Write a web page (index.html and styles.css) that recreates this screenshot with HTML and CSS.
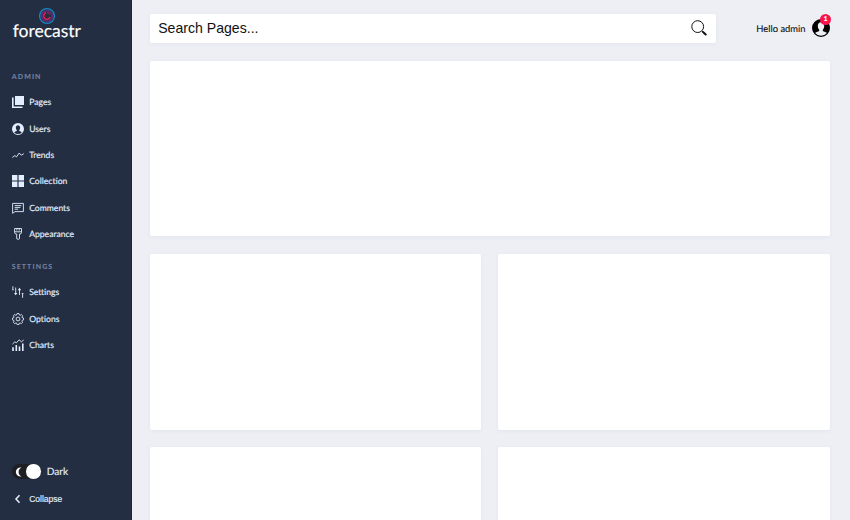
FILE: index.html
```html
<!DOCTYPE html>
<html lang="en">
<head>
<meta charset="utf-8">
<title>forecastr</title>
<link rel="stylesheet" href="styles.css">
</head>
<body>
<svg class="defs" width="0" height="0" aria-hidden="true">
  <symbol id="user" viewBox="0 0 24 24"><path fill-rule="evenodd" d="M12 0a12 12 0 1 0 0 24 12 12 0 0 0 0-24ZM4.200 18.500c1.500-1.300 3.300-1.600 5-2.300.6-.3.6-1.600.1-2.200-1-1.200-1.600-2.700-1.600-4.600 0-3 1.700-5 4.300-5s4.300 2 4.300 5c0 1.900-.6 3.400-1.600 4.600-.5.600-.5 1.900.1 2.200 1.700.7 3.500 1 5 2.300A10 10 0 0 1 12 22.200a10 10 0 0 1-7.800-3.700Z"/></symbol>
</svg>
<div class="app">
  <aside class="sidebar">
    <div class="logo">
      <svg class="logo-mark" viewBox="0 0 18 18" fill="none">
        <circle cx="9" cy="9" r="7.400" stroke="#1489c4" stroke-width="1.300"/>
        <circle cx="9" cy="9" r="5.300" stroke="#692a82" stroke-width="1.500"/>
        <path d="M8 5.800a3.300 3.300 0 1 0 4.100 4.300" stroke="#e31b51" stroke-width="1.500"/>
        <path d="M9 5.600a3.300 3.300 0 0 1 3.100 2.200" stroke="#b12362" stroke-width="1"/>
      </svg>
      <span class="logo-name">forecastr</span>
    </div>
    <h3>Admin</h3>
    <ul>
      <li><svg viewBox="0 0 12 12"><path d="M3 0h9v9H3ZM0 1.500h1.600v8.900h8.900V12H0Z"/></svg>Pages</li>
      <li><svg viewBox="0 0 24 24"><use href="#user"/></svg>Users</li>
      <li><svg class="line" viewBox="0 0 12 12"><path d="M.3 8.500 2.900 6.600l1.600 1.300L7.200 4l2 2.200L11.800 4.700"/></svg>Trends</li>
      <li><svg viewBox="0 0 12 12"><path d="M0 0h5.400v5.400H0ZM6.600 0H12v5.400H6.600ZM0 6.600h5.400V12H0ZM6.600 6.600H12V12H6.600Z"/></svg>Collection</li>
      <li><svg class="line" viewBox="0 0 12 12"><path d="M.6 1.400h10.800v8.200H3L.6 11.300ZM2.700 3.600h6.600M2.700 5.400h5.700M2.700 7.200h3.500"/></svg>Comments</li>
      <li><svg class="line" viewBox="0 0 12 12"><path d="M2.600.5h6.900v4.200q0 1.300-2 1.400v4.600q-1.400 1.500-2.800 0V6.100q-2.100-.1-2.100-1.400ZM2.600 3.800h6.900M4.900.5v2M7.200.5v2"/></svg>Appearance</li>
    </ul>
    <h3>Settings</h3>
    <ul>
      <li><svg class="line" viewBox="0 0 12 12"><path d="M.9.300v3.500M3.700 1.500v6.200M7.500 9V3.500M10.600 11.800V7.500M.2 3.800h1.400M9.800 7.500h1.600"/><path class="solid" d="M2 7h3.400L3.700 9.300ZM5.800 4.200h3.400L7.500 1.700Z"/></svg>Settings</li>
      <li><svg class="line" viewBox="0 0 12 12"><path d="m5.100.5h1.800l.4 1.400.8.400L9.400 1.500l1.200 1.200-.7 1.300.3.700 1.400.4v1.800l-1.400.4-.3.800.7 1.300-1.200 1.200-1.300-.7-.8.300-.4 1.400H5.100l-.4-1.400-.8-.3-1.300.7-1.200-1.200.7-1.300-.3-.8L.4 6.900V5.100l1.400-.4.300-.7-.7-1.300 1.200-1.200 1.300.8.800-.4Z"/><circle cx="6" cy="6" r="1.900"/></svg>Options</li>
      <li><svg class="line" viewBox="0 0 12 12"><path d="m.4 5.100 2.400-2.200 1.600.9L7.100.8l2.300 2L11.700 1"/><path class="bars" d="M1 12V8.200M4.300 12V5.900M7.500 12V7.500M10.800 12V4.500"/></svg>Charts</li>
    </ul>
    <div class="bottom">
      <div class="theme">
        <span class="switch"><svg viewBox="0 0 8 10"><path d="M6.400.5A4.600 4.600 0 1 0 6.400 9.500C4.300 8.200 3.600 6.700 3.600 5S4.300 1.800 6.400.5Z"/></svg><i></i></span>Dark
      </div>
      <button><svg viewBox="0 0 12 12"><path d="M7.500 2.300 4 6l3.500 3.700"/></svg>Collapse</button>
    </div>
  </aside>
  <main>
    <header>
      <label class="search">
        <input type="text" placeholder="Search Pages..." aria-label="Search pages">
        <svg viewBox="0 0 16 16"><circle cx="6.700" cy="6.600" r="5.900"/><path d="m11 11 1 1"/><path class="handle" d="m12 12 2.700 2.500"/></svg>
      </label>
      <div class="account"><span>Hello admin</span><div class="avatar"><svg viewBox="0 0 24 24"><use href="#user"/></svg><b>1</b></div></div>
    </header>
    <section class="grid">
      <article class="wide"></article>
      <article></article>
      <article></article>
      <article></article>
      <article></article>
    </section>
  </main>
</div>
</body>
</html>
```
FILE: styles.css
```css
* { box-sizing: border-box; }
body { margin: 0; font-family: Lato, sans-serif; background: #eeeff5; color: #111; text-rendering: geometricPrecision; overflow: hidden; }
.defs { display: block; }
.app { display: grid; grid-template-columns: 131.700px 1fr; grid-template-rows: 520px; height: 520px; overflow: hidden; }
.sidebar { background: #242e42; color: #e3efff; display: flex; flex-direction: column; padding: 7px 11.700px 8px; border-right: 1px solid #1d273b; }
.logo { display: flex; flex-direction: column; width: 72px; height: 34px; }
.logo-mark { width: 18px; height: 18px; margin-left: 26px; flex: none; }
.logo-name { color: #fff; font-size: 17.500px; line-height: 20px; margin: -4.500px 0 0 1px; -webkit-text-stroke: .15px #fff; }
h3 { margin: 30.600px 0 0; height: 10px; font-size: 7px; line-height: 10px; font-weight: 900; letter-spacing: 1.100px; text-transform: uppercase; color: #7080a0; }
ul { list-style: none; margin: 7.400px 0 0; padding: 0; }
li { height: 26.400px; display: flex; align-items: center; gap: 5.500px; font-size: 8.600px; -webkit-text-stroke: .15px currentColor; }
li svg, button svg { width: 12px; height: 12px; fill: currentColor; flex: none; }
li .line { fill: none; stroke: currentColor; stroke-width: .9; }
.line .solid { fill: currentColor; stroke: none; }
.line .bars { stroke-width: 1.600; }
ul + h3 { margin-top: 14.300px; }
.bottom { margin-top: auto; }
.theme { display: flex; align-items: center; gap: 6px; font-size: 10.100px; height: 15px; -webkit-text-stroke: .15px currentColor; }
.switch { display: flex; align-items: center; justify-content: space-between; width: 29px; height: 15px; padding: 0 0 0 3px; border-radius: 8px; background: #1e1f22; }
.switch svg { width: 8px; height: 10px; fill: #fff; }
.switch i { width: 14.500px; height: 14.500px; border-radius: 50%; background: #fff; }
button { display: flex; align-items: center; gap: 5.500px; height: 26px; margin-top: 7px; padding: 0; border: 0; background: none; color: #e3efff; font: 8.500px "Liberation Sans", Arial, sans-serif; -webkit-text-stroke: .15px currentColor; }
button svg { fill: none; stroke: currentColor; stroke-width: 1.500; }
main { padding: 13.500px 20.500px 0 18px; min-width: 0; }
header { display: flex; justify-content: space-between; align-items: center; height: 29.500px; margin-bottom: 17.500px; }
.search { display: flex; align-items: center; justify-content: space-between; width: 566px; height: 29.500px; padding: 0 9px 0 8.500px; background: #fff; border-radius: 2px; box-shadow: 0 1px 4px rgba(40, 50, 90, .05); }
input { width: 300px; padding: 0; border: 0; outline: 0; font: 14.100px "Liberation Sans", Arial, sans-serif; color: #111; background: none; }
input::placeholder { color: #111; opacity: 1; }
.search svg { width: 16px; height: 16px; fill: none; stroke: #111; stroke-width: 1; }
.search .handle { stroke-width: 2; stroke-linecap: round; }
.account { display: flex; align-items: center; gap: 6px; font-size: 9.400px; -webkit-text-stroke: .1px currentColor; }
.account > span { padding-top: 1.500px; }
.avatar { position: relative; width: 18px; height: 18px; }
.avatar svg { display: block; width: 18px; height: 18px; fill: #000; }
.avatar b { position: absolute; top: -5.500px; right: -1.500px; width: 11px; height: 11px; border-radius: 50%; background: #f7144b; color: #fff; font-size: 7px; line-height: 11px; text-align: center; font-weight: 700; }
.grid { display: grid; grid-template-columns: 1fr 1fr; grid-auto-rows: 175.900px; gap: 17.600px; }
article { background: #fff; border-radius: 2px; box-shadow: 0 1px 4px rgba(40, 50, 90, .05); }
.wide { grid-column: 1 / -1; }
```
